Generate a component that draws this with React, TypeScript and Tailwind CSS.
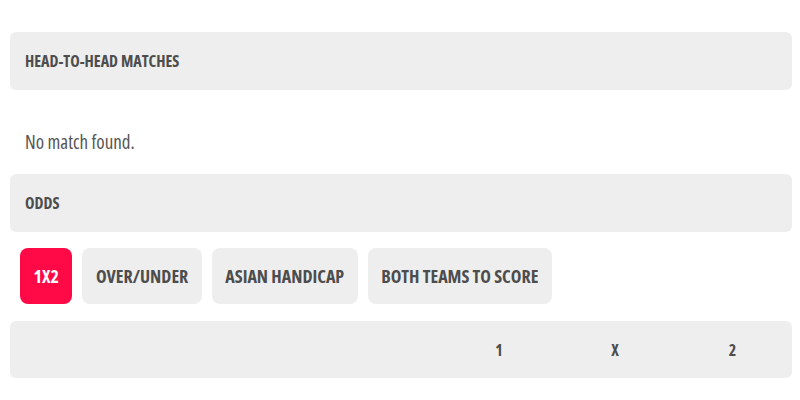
const tabs = ['1X2', 'OVER/UNDER', 'ASIAN HANDICAP', 'BOTH TEAMS TO SCORE'];

function SectionHeader({ title }: { title: string }) {
  return (
    <div className="flex h-[58px] items-center rounded-md bg-[#eeeeee] px-[15px] text-[16px] font-bold text-[#4d4d4d]">
      {title}
    </div>
  );
}

export default function App() {
  const active = '1X2';

  return (
    <div className="min-h-[400px] bg-white pt-[32px] pr-[8px] pl-[10px] font-['Open_Sans',sans-serif] font-stretch-condensed">
      <SectionHeader title="HEAD-TO-HEAD MATCHES" />

      <p className="flex h-[84px] items-center px-[15px] pt-[20px] text-[19px] text-[#555555]">No match found.</p>

      <SectionHeader title="ODDS" />

      {/* market tabs */}
      <div className="flex gap-[10px] px-[10px] pt-[16px]">
        {tabs.map((tab) => (
          <button
            key={tab}
            type="button"
            className={`h-[56px] rounded-lg px-[13.5px] text-[18px] font-bold ${
              tab === active ? 'bg-[#ff0a47] text-white' : 'bg-[#eeeeee] text-[#4d4d4d]'
            }`}
          >
            {tab}
          </button>
        ))}
      </div>

      {/* odds table header */}
      <div className="mt-[17px] grid h-[57px] grid-cols-[431px_116px_116px_1fr] items-center rounded-md bg-[#eeeeee] text-[16px] font-bold text-[#4d4d4d]">
        <span />
        <span className="text-center">1</span>
        <span className="text-center">X</span>
        <span className="text-center">2</span>
      </div>
    </div>
  );
}
